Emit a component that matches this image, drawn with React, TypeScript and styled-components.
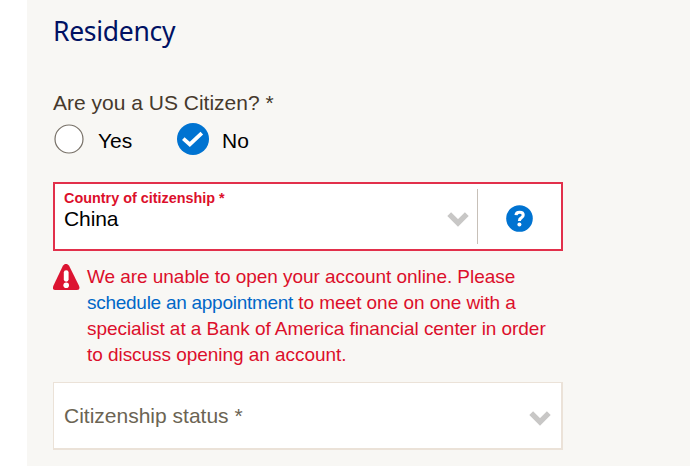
import React from 'react';
import styled, { createGlobalStyle } from 'styled-components';

const GlobalStyle = createGlobalStyle`
  * { box-sizing: border-box; }
  body {
    margin: 0;
    background: #fff;
    overflow: hidden;
    font-family: "Liberation Sans", Arial, sans-serif;
  }
`;

const Page = styled.main`
  height: 466px;
  margin-left: 27px;
  padding: 13px 0 0 26px;
  background: #f8f7f4;
`;

const Heading = styled.h1`
  margin: 0;
  font: 400 26.5px/36px "Noto Sans", sans-serif;
  letter-spacing: -0.3px;
  color: #001163;
`;

const Question = styled.div`
  margin-top: 42px;
  font-size: 21px;
  line-height: 24px;
  color: #46392c;
`;

const Options = styled.div`
  display: flex;
  align-items: center;
  height: 32px;
  margin-top: 8px;
`;

const Option = styled.label<{ $width: number; $gap: number }>`
  display: flex;
  align-items: center;
  gap: ${(p) => p.$gap}px;
  width: ${(p) => p.$width}px;
  font-size: 21px;
  line-height: 24px;
  color: #000;
`;

const OptionText = styled.span`
  padding-top: 3px;
`;

const Field = styled.div<{ $error?: boolean }>`
  display: flex;
  width: 510px;
  height: ${(p) => (p.$error ? 69 : 68)}px;
  margin-top: ${(p) => (p.$error ? 27 : 14)}px;
  padding-left: ${(p) => (p.$error ? 9 : 10)}px;
  background: #fff;
  border: solid ${(p) => (p.$error ? '#e2304b' : '#ebe2d8')};
  border-width: ${(p) => (p.$error ? '2px' : '1px 2px 2px 1px')};
  align-items: center;
`;

const FieldText = styled.div`
  flex: 1;
  align-self: flex-start;
  padding-top: 5px;
`;

const FieldLabel = styled.div`
  font-weight: 700;
  font-size: 14.4px;
  line-height: 18px;
  color: #dc0f2b;
`;

const FieldValue = styled.div`
  font-size: 21px;
  line-height: 24px;
  letter-spacing: -0.1px;
  color: #000;
`;

const Placeholder = styled.div`
  flex: 1;
  padding-top: 1px;
  font-size: 21px;
  line-height: 24px;
  color: #6b6453;
`;

const ChevronSlot = styled.div<{ $right: number; $top: number }>`
  display: flex;
  margin: ${(p) => p.$top}px ${(p) => p.$right}px 0 0;
`;

const HelpSlot = styled.div`
  display: flex;
  align-items: center;
  width: 84px;
  height: 55px;
  padding: 4px 0 0 28px;
  border-left: 1px solid #c7c0b8;
`;

const ErrorMessage = styled.div`
  display: flex;
  gap: 7px;
  margin-top: 13px;
`;

const ErrorText = styled.p`
  width: 468px;
  margin: 0;
  font-size: 19px;
  line-height: 26px;
  letter-spacing: -0.05px;
  color: #dc0f2b;
`;

const Link = styled.a`
  color: #0067c8;
  letter-spacing: -0.27px;
  text-decoration: none;
`;

const Chevron = () => (
  <svg width="22" height="15" viewBox="0 0 22 15">
    <path d="M2.2 2.2 L11 10.9 L19.8 2.2" fill="none" stroke="#c8c7c6" strokeWidth="5.4" />
  </svg>
);

const EmptyRadio = () => (
  <svg width="32" height="32" viewBox="0 0 32 32">
    <circle cx="16" cy="16" r="14" fill="#fff" stroke="#777067" strokeWidth="1.2" />
  </svg>
);

const CheckedRadio = () => (
  <svg width="32" height="32" viewBox="0 0 32 32">
    <circle cx="16" cy="16" r="16" fill="#0073d1" />
    <path d="M6.3 15.6 L12.8 21.5 L24.8 10.2" fill="none" stroke="#fff" strokeWidth="3.8" />
  </svg>
);

const HelpIcon = () => (
  <svg width="27" height="27" viewBox="0 0 27 27">
    <circle cx="13.5" cy="13.5" r="13.3" fill="#0073d1" />
    <path
      d="M10 10.2 Q10.2 7.2 13.6 7.2 Q17.2 7.2 17.2 10 Q17.2 11.8 15.3 12.8 Q13.4 13.8 13.4 16"
      fill="none"
      stroke="#fff"
      strokeWidth="3.1"
    />
    <circle cx="13.4" cy="19.5" r="2" fill="#fff" />
  </svg>
);

const AlertIcon = () => (
  <svg width="27" height="27" viewBox="0 0 27 27">
    <path
      d="M9.9 1.8 Q13 -2.2 16.1 1.8 L26 21.8 Q27.6 26 24 26 L2.4 26 Q-1.2 26 0.4 21.8 Z"
      fill="#dc1431"
    />
    <path d="M13.2 8.6 V15.3" stroke="#fff" strokeWidth="4.8" strokeLinecap="round" />
    <circle cx="13.2" cy="21.2" r="2.8" fill="#fff" />
  </svg>
);

export default function App() {
  return (
    <>
      <GlobalStyle />
      <Page>
        <Heading>Residency</Heading>
        <Question>Are you a US Citizen? *</Question>
        <Options>
          <Option $width={124} $gap={13}>
            <EmptyRadio />
            <OptionText>Yes</OptionText>
          </Option>
          <Option $width={90} $gap={13}>
            <CheckedRadio />
            <OptionText>No</OptionText>
          </Option>
        </Options>
        <Field $error>
          <FieldText>
            <FieldLabel>Country of citizenship *</FieldLabel>
            <FieldValue>China</FieldValue>
          </FieldText>
          <ChevronSlot $right={8} $top={5}>
            <Chevron />
          </ChevronSlot>
          <HelpSlot>
            <HelpIcon />
          </HelpSlot>
        </Field>
        <ErrorMessage>
          <AlertIcon />
          <ErrorText>
            We are unable to open your account online. Please
            <br />
            <Link>schedule an appointment</Link> to meet one on one with a
            <br />
            specialist at a Bank of America financial center in order
            <br />
            to discuss opening an account.
          </ErrorText>
        </ErrorMessage>
        <Field>
          <Placeholder>Citizenship status *</Placeholder>
          <ChevronSlot $right={10} $top={6}>
            <Chevron />
          </ChevronSlot>
        </Field>
      </Page>
    </>
  );
}
